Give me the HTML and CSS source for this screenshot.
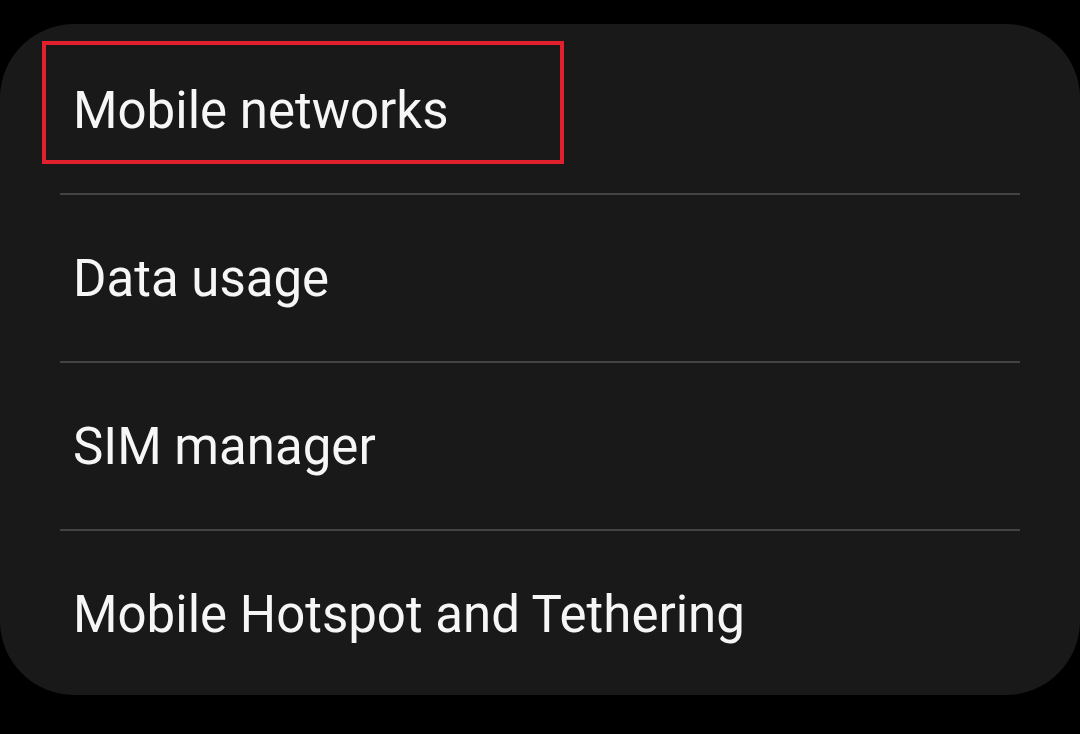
FILE: index.html
```html
<!DOCTYPE html>
<html lang="en">

    <head>
        <meta charset="UTF-8">
        <meta name="viewport" content="width=device-width, initial-scale=1.0">
        <title>Connections</title>
        <link rel="stylesheet" href="styles.css">
    </head>

    <body>
        <div class="card">
            <div class="item">
                <span class="label">Mobile networks</span>
                <span class="highlight"></span>
            </div>
            <div class="divider"></div>
            <div class="item">
                <span class="label">Data usage</span>
            </div>
            <div class="divider"></div>
            <div class="item">
                <span class="label">SIM manager</span>
            </div>
            <div class="divider"></div>
            <div class="item">
                <span class="label">Mobile Hotspot and Tethering</span>
            </div>
        </div>
    </body>

</html>
```

FILE: styles.css
```css
body {
    font-family: Roboto, "Noto Sans", sans-serif;
    background-color: #000;
    margin: 0;
    padding-top: 24px;
    height: 734px;
    box-sizing: border-box;
    overflow: hidden;
}

.card {
    background-color: #191919;
    border-radius: 74px;
    height: 671px;
    padding-top: 3px;
    box-sizing: border-box;
}

.item {
    position: relative;
    height: 166px;
    display: flex;
    align-items: center;
    padding-left: 73px;
}

.label {
    color: #f6f6f6;
    font-size: 51px;
    letter-spacing: 0;
}

.divider {
    height: 2px;
    margin: 0 60px;
    background-color: #434343;
}

.highlight {
    position: absolute;
    left: 42px;
    top: 14px;
    width: 522px;
    height: 123px;
    border: 4px solid #e0212d;
    box-sizing: border-box;
}
```
